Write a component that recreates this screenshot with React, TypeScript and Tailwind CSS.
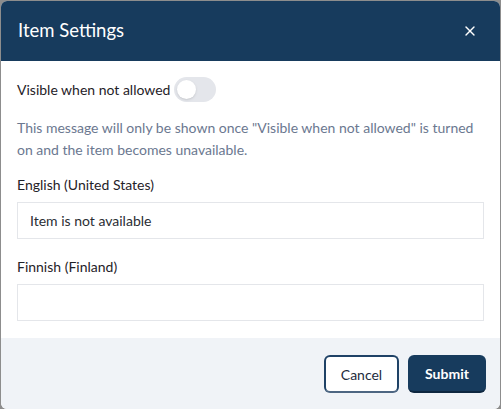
import { X } from 'lucide-react'

export default function App() {
  return (
    <div className="h-[409px] w-[501px] bg-[#8d8d8d] pl-px pt-px" style={{ fontFamily: 'Lato, "Open Sans", sans-serif' }}>
      <div className="flex h-[408px] w-[499px] flex-col overflow-hidden rounded-md bg-white">
        <div className="flex h-[60px] shrink-0 items-center justify-between bg-[#173b5d] pl-[17px] pr-[22px]">
          <h2 className="text-[18.5px] text-white">Item Settings</h2>
          <X className="h-4 w-4 text-white" strokeWidth={2} />
        </div>

        <div className="flex flex-1 flex-col px-[16px] pt-[16px]">
          <div className="flex h-[25px] items-center gap-[4px]">
            <span className="text-[14px] text-[#1f2228]">Visible when not allowed</span>
            <div className="flex h-[25px] w-[42px] items-center rounded-full bg-[#e4e6eb] px-[3px]">
              <div className="h-[19px] w-[19px] rounded-full bg-white shadow-sm" />
            </div>
          </div>

          <p className="mt-[15px] text-[14px] leading-[22px] text-[#6b7890]">
            This message will only be shown once "Visible when not allowed" is turned on and the item becomes unavailable.
          </p>

          <label className="mt-[13px] text-[14px] leading-[22px] text-[#1f2228]">English (United States)</label>
          <div className="mt-[6px] flex h-[37px] items-center border border-[#e4e6ea] px-[12px] text-[14px] text-[#2a2d33]">
            Item is not available
          </div>

          <label className="mt-[17px] text-[14px] leading-[22px] text-[#1f2228]">Finnish (Finland)</label>
          <div className="mt-[6px] h-[37px] border border-[#e4e6ea]" />
        </div>

        <div className="flex h-[71px] shrink-0 items-start justify-end gap-[9px] bg-[#f0f3f7] pr-[14px] pt-[17px]">
          <button className="h-[38px] w-[75px] rounded-md border-2 border-[#1f4266] border-b-[#4d6682] bg-white text-[14px] text-[#1d2b3c]">
            Cancel
          </button>
          <button className="h-[38px] w-[78px] rounded-md border-b-2 border-[#0e2740] bg-[#173b5d] text-[14px] font-bold text-white">
            Submit
          </button>
        </div>
      </div>
    </div>
  )
}
